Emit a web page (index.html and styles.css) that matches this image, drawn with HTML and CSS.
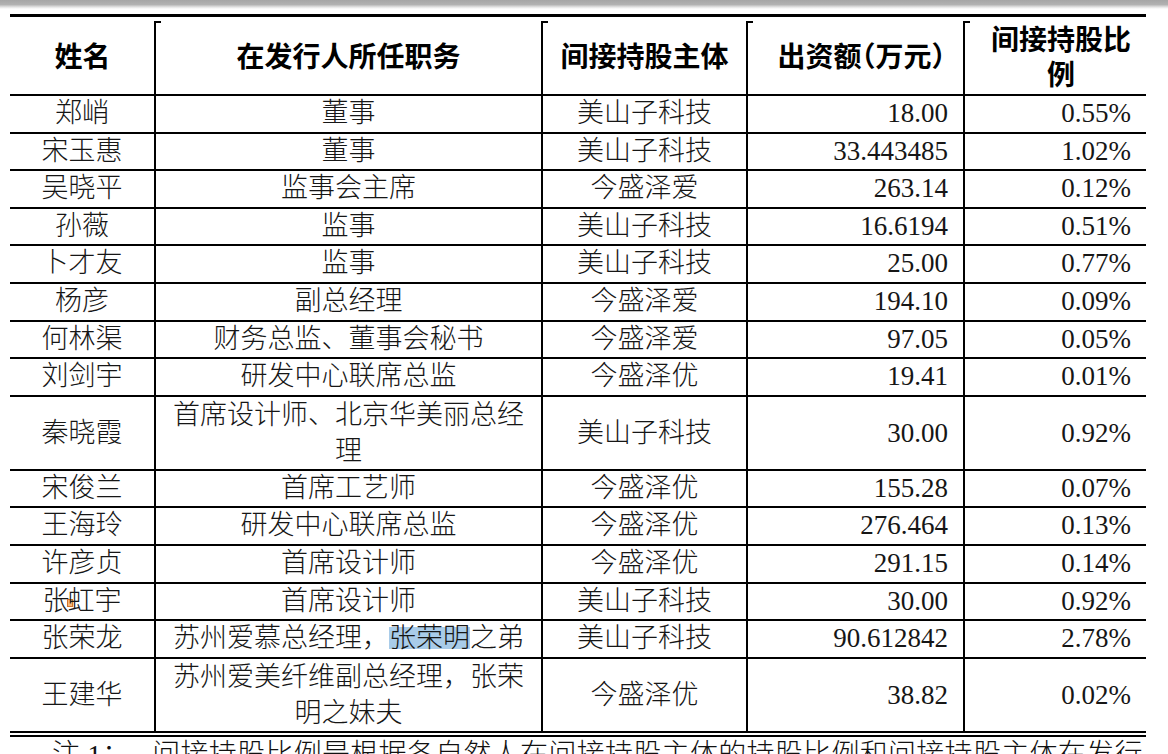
FILE: index.html
```html
<!DOCTYPE html>
<html lang="zh-CN">
<head>
<meta charset="utf-8">
<title>间接持股情况</title>
<link rel="stylesheet" href="styles.css">
</head>
<body>
<div class="topband"></div>
<table class="holdings">
  <colgroup>
    <col class="c-name">
    <col class="c-role">
    <col class="c-entity">
    <col class="c-amount">
    <col class="c-ratio">
  </colgroup>
  <thead>
    <tr>
      <th class="first">姓名</th>
      <th>在发行人所任职务</th>
      <th>间接持股主体</th>
      <th class="shift">出资额<span class="halt">（</span>万元<span class="halt">）</span></th>
      <th class="shift">间接持股比例</th>
    </tr>
  </thead>
  <tbody>
    <tr><td>郑峭</td><td>董事</td><td>美山子科技</td><td class="num">18.00</td><td class="num">0.55%</td></tr>
    <tr><td>宋玉惠</td><td>董事</td><td>美山子科技</td><td class="num">33.443485</td><td class="num">1.02%</td></tr>
    <tr><td>吴晓平</td><td>监事会主席</td><td>今盛泽爱</td><td class="num">263.14</td><td class="num">0.12%</td></tr>
    <tr><td>孙薇</td><td>监事</td><td>美山子科技</td><td class="num">16.6194</td><td class="num">0.51%</td></tr>
    <tr><td>卜才友</td><td>监事</td><td>美山子科技</td><td class="num">25.00</td><td class="num">0.77%</td></tr>
    <tr><td>杨彦</td><td>副总经理</td><td>今盛泽爱</td><td class="num">194.10</td><td class="num">0.09%</td></tr>
    <tr><td>何林渠</td><td>财务总监、董事会秘书</td><td>今盛泽爱</td><td class="num">97.05</td><td class="num">0.05%</td></tr>
    <tr><td>刘剑宇</td><td>研发中心联席总监</td><td>今盛泽优</td><td class="num">19.41</td><td class="num">0.01%</td></tr>
    <tr class="tall"><td>秦晓霞</td><td>首席设计师、北京华美丽总经理</td><td>美山子科技</td><td class="num">30.00</td><td class="num">0.92%</td></tr>
    <tr><td>宋俊兰</td><td>首席工艺师</td><td>今盛泽优</td><td class="num">155.28</td><td class="num">0.07%</td></tr>
    <tr><td>王海玲</td><td>研发中心联席总监</td><td>今盛泽优</td><td class="num">276.464</td><td class="num">0.13%</td></tr>
    <tr><td>许彦贞</td><td>首席设计师</td><td>今盛泽优</td><td class="num">291.15</td><td class="num">0.14%</td></tr>
    <tr><td>张<span class="mark"></span>虹宇</td><td>首席设计师</td><td>美山子科技</td><td class="num">30.00</td><td class="num">0.92%</td></tr>
    <tr><td>张荣龙</td><td>苏州爱慕总经理，<span class="sel">张荣明</span>之弟</td><td>美山子科技</td><td class="num">90.612842</td><td class="num">2.78%</td></tr>
    <tr class="tall last"><td>王建华</td><td>苏州爱美纤维副总经理，张荣明之妹夫</td><td>今盛泽优</td><td class="num">38.82</td><td class="num">0.02%</td></tr>
  </tbody>
</table>
<p class="note"><span class="lead">注 1：</span>间接持股比例是根据各自然人在间接持股主体的持股比例和间接持股主体在发行人的持股比例计算。</p>
</body>
</html>
```

FILE: styles.css
```css
html, body {
  margin: 0;
  padding: 0;
  background: #ffffff;
}
body {
  width: 1168px;
  height: 754px;
  overflow: hidden;
  font-family: "Liberation Serif", "Noto Sans CJK SC", serif;
  color: #161616;
}
.topband {
  height: 9px;
  background: linear-gradient(#a6a6a6 0, #b2b2b2 50%, #e6e6e6 80%, #ffffff 100%);
}
.holdings {
  margin: 5px 0 0 10px;
  width: 1136px;
  table-layout: fixed;
  border-collapse: collapse;
  border-top: 3px solid #000;
}
.c-name { width: 145px; }
.c-role { width: 387px; }
.c-entity { width: 205px; }
.c-amount { width: 217px; }
.c-ratio { width: 182px; }

.holdings th {
  position: relative;
  height: 77px;
  padding: 0 8px;
  font-family: "Noto Sans CJK SC", sans-serif;
  font-weight: 700;
  font-size: 28px;
  line-height: 35px;
  color: #000;
  text-align: center;
  vertical-align: middle;
  border-bottom: 2px solid #000;
  border-left: none;
  border-right: none;
}
.holdings th.shift {
  padding: 0 2px 0 14px;
}
.holdings th + th::before {
  content: "";
  position: absolute;
  left: -1px;
  top: 4px;
  bottom: 0;
  width: 5px;
  border-left: 2px solid #000;
  border-top: 2px solid #000;
}
.halt {
  font-feature-settings: "halt" 1;
}
.holdings td {
  padding: 0 8px;
  font-size: 27px;
  line-height: 35.6px;
  font-weight: 300;
  text-align: center;
  vertical-align: middle;
  border-bottom: 2px solid #000;
  border-left: 2px solid #000;
}
.holdings td:first-child {
  border-left: none;
}
.holdings td.num {
  text-align: right;
  padding-right: 15px;
  font-weight: 400;
}
.holdings tr.tall td {
  line-height: 36px;
}
.holdings tr.last td {
  border-bottom: 6px double #000;
}
.sel {
  background: linear-gradient(transparent 14%, #a9cce9 14%, #a9cce9 86%, transparent 86%);
}
.mark {
  display: inline-block;
  width: 4px;
  height: 6px;
  margin: 0 -5px 0 -3px;
  background: #f4b77a;
  border: 1px solid #d4742a;
  vertical-align: 3px;
}
.note {
  margin: 0 0 0 10px;
  width: 1136px;
  font-size: 28px;
  line-height: 36px;
  text-indent: 42px;
  letter-spacing: 0.3px;
  color: #111;
  font-weight: 300;
}
.lead {
  margin-right: 22px;
}
```
